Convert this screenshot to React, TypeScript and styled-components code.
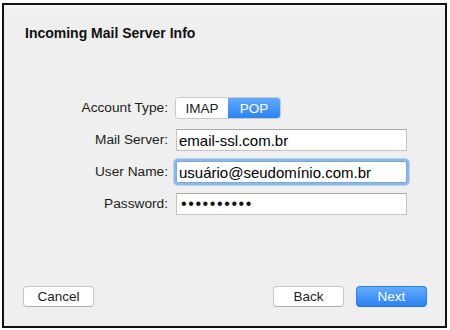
import React from "react";
import styled, { createGlobalStyle } from "styled-components";

const Global = createGlobalStyle`
  html, body { margin: 0; padding: 0; background: #ffffff; }
  body { font-family: "Liberation Sans", Arial, sans-serif; }
`;

const Frame = styled.div`
  box-sizing: border-box;
  margin: 3px 0 0 2px;
  width: 445px;
  height: 325px;
  border: 2px solid #111;
  background: linear-gradient(#f6f6f6 0px, #efefef 6px, #efefef 100%);
  display: flex;
  flex-direction: column;
`;

const Title = styled.div`
  padding: 20px 0 0 21px;
  font-size: 14px;
  line-height: 16px;
  font-weight: bold;
  color: #111;
`;

const Form = styled.div`
  margin-top: 56px;
  display: grid;
  grid-template-columns: 164px 231px;
  column-gap: 8px;
  row-gap: 10px;
  align-items: center;
`;

const Label = styled.div`
  text-align: right;
  font-size: 13.7px;
  line-height: 22px;
  color: #1c1c1c;
`;

const Segmented = styled.div`
  display: flex;
  width: 106px;
  height: 22px;
  box-sizing: border-box;
  border: 1px solid #c9c9c9;
  border-radius: 4px;
  overflow: hidden;
  margin-left: -1px;
`;

const Segment = styled.div<{ $active?: boolean }>`
  flex: 1;
  display: flex;
  align-items: center;
  justify-content: center;
  font-size: 13.5px;
  color: ${(p) => (p.$active ? "#ffffff" : "#222")};
  background: ${(p) =>
    p.$active ? "linear-gradient(#62a9fb, #2b84f3)" : "#ffffff"};
`;

const Field = styled.div<{ $focused?: boolean }>`
  box-sizing: border-box;
  height: 22px;
  background: #fff;
  border: 1px solid #c2c2c2;
  border-top-color: #a9a9a9;
  display: flex;
  align-items: center;
  padding-left: 2px;
  font-size: 15px;
  color: #000;
  ${(p) =>
    p.$focused
      ? "box-shadow: 0 0 0 2px #8ab8ea, 0 0 0 3px rgba(138,184,234,0.5); border-color: #7fa9d8; border-radius: 2px;"
      : ""}
`;

const Dots = styled.span`
  font-size: 16px;
  letter-spacing: 1.6px;
  padding-left: 2px;
  color: #111;
`;

const Footer = styled.div`
  margin-top: auto;
  padding: 0 18px 19px 19px;
  display: flex;
  align-items: center;
  gap: 12px;
`;

const Spacer = styled.div`
  flex: 1;
`;

const Button = styled.div<{ $primary?: boolean }>`
  box-sizing: border-box;
  width: 71px;
  height: 21px;
  border-radius: 4px;
  display: flex;
  align-items: center;
  justify-content: center;
  font-size: 13.5px;
  color: ${(p) => (p.$primary ? "#ffffff" : "#1c1c1c")};
  background: ${(p) =>
    p.$primary ? "linear-gradient(#64abfb, #2a82f2)" : "#ffffff"};
  border: 1px solid ${(p) => (p.$primary ? "#2f7fe0" : "#c6c6c6")};
  border-bottom-color: ${(p) => (p.$primary ? "#2470d0" : "#b0b0b0")};
`;

export default function App() {
  return (
    <>
      <Global />
      <Frame>
        <Title>Incoming Mail Server Info</Title>
        <Form>
          <Label>Account Type:</Label>
          <Segmented>
            <Segment>IMAP</Segment>
            <Segment $active>POP</Segment>
          </Segmented>
          <Label>Mail Server:</Label>
          <Field>email-ssl.com.br</Field>
          <Label>User Name:</Label>
          <Field $focused>usuário@seudomínio.com.br</Field>
          <Label>Password:</Label>
          <Field>
            <Dots>••••••••••</Dots>
          </Field>
        </Form>
        <Footer>
          <Button>Cancel</Button>
          <Spacer />
          <Button>Back</Button>
          <Button $primary>Next</Button>
        </Footer>
      </Frame>
    </>
  );
}
